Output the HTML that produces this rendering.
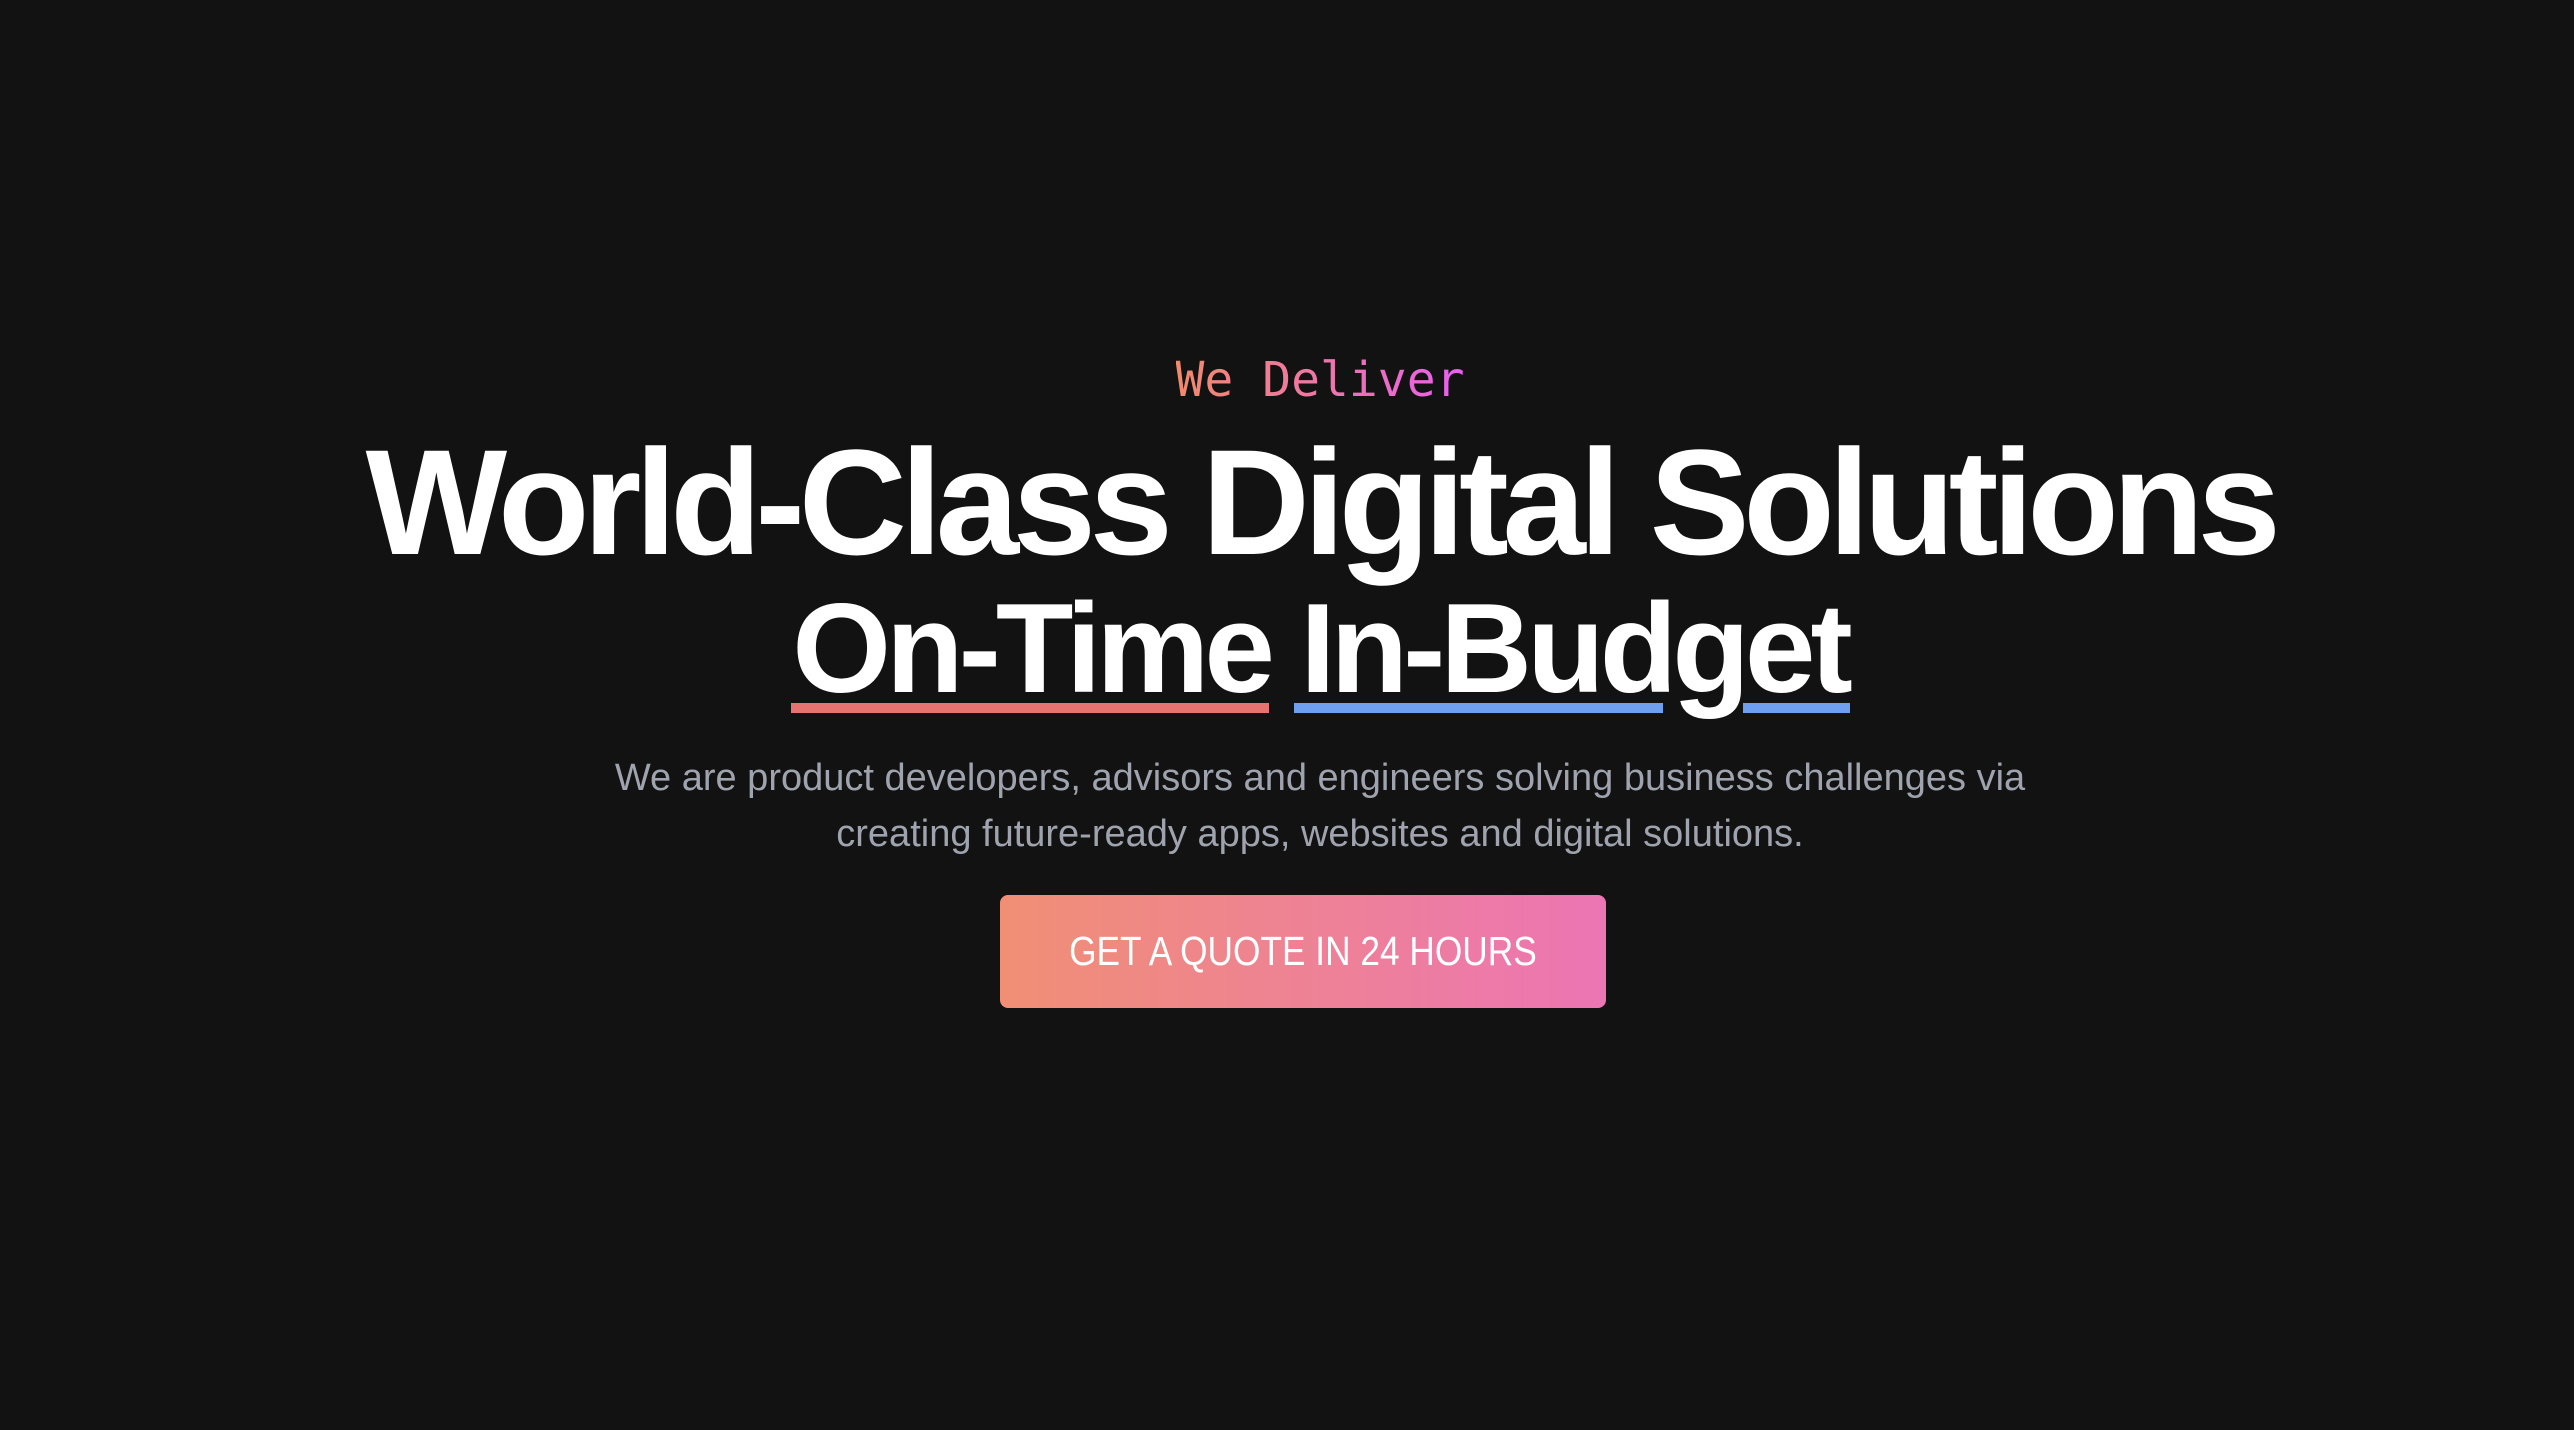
<!DOCTYPE html>
<html><head><meta charset="utf-8"><style>
html,body{margin:0;padding:0;}
body{width:2574px;height:1430px;background:#121212;position:relative;overflow:hidden;font-family:"Liberation Sans",sans-serif;}
.abs{position:absolute;left:33px;width:2574px;text-align:center;white-space:nowrap;}
.tag{top:348px;font-family:"DejaVu Sans Mono","Liberation Mono",monospace;font-size:48px;line-height:64px;}
.tag span{background:linear-gradient(90deg,#f08a6c,#ee76a8,#e85ff0);-webkit-background-clip:text;background-clip:text;color:transparent;}
.h1{top:417px;font-size:150px;line-height:170px;font-weight:bold;color:#fff;letter-spacing:-6.5px;}
.h2{top:578px;font-size:127px;line-height:140px;font-weight:bold;color:#fff;letter-spacing:-5px;}
.ul{position:absolute;height:10px;top:703px;}
.p{top:750px;font-size:38px;line-height:56px;color:#9ea3ad;}
.btn{position:absolute;left:1000px;top:895px;width:606px;height:113px;border-radius:8px;background:linear-gradient(90deg,#f08f75,#ec75b4);color:#fff;font-size:41px;line-height:113px;text-align:center;}
.btn span{display:inline-block;transform:scaleX(0.86);}
</style></head><body>
<div class="abs tag"><span>We Deliver</span></div>
<div class="abs h1">World-Class Digital Solutions</div>
<div class="ul" style="left:791px;width:478px;background:#e5736f"></div>
<div class="ul" style="left:1294px;width:369px;background:#6fa0f0"></div>
<div class="ul" style="left:1743px;width:107px;background:#6fa0f0"></div>
<div class="abs h2">On-Time In-Budget</div>
<div class="abs p">We are product developers, advisors and engineers solving business challenges via<br>creating future-ready apps, websites and digital solutions.</div>
<div class="btn"><span>GET A QUOTE IN 24 HOURS</span></div>
</body></html>
